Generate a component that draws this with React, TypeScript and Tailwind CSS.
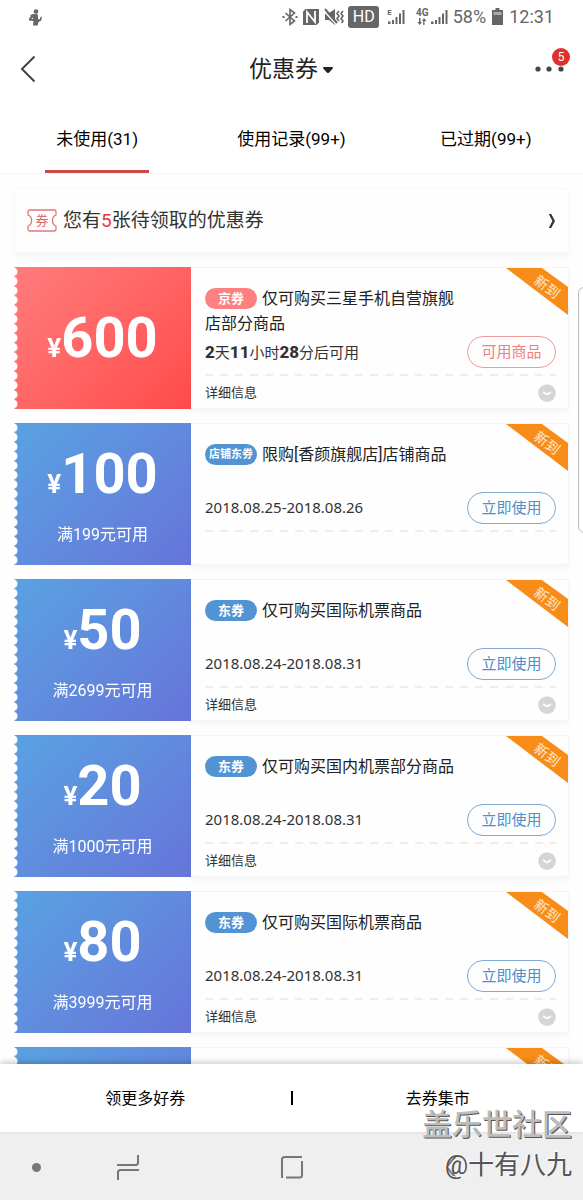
import React from "react";

type Coupon = {
  theme: "red" | "blue";
  amount: string;
  condition?: string;
  tag: string;
  title: string;
  countdown?: [string, string][];
  period?: string;
  action: string;
  details: boolean;
};

const coupons: Coupon[] = [
  {
    theme: "red",
    amount: "600",
    tag: "京券",
    title: "仅可购买三星手机自营旗舰店部分商品",
    countdown: [["2", "天"], ["11", "小时"], ["28", "分后可用"]],
    action: "可用商品",
    details: true,
  },
  { theme: "blue", amount: "100", condition: "满199元可用", tag: "店铺东券", title: "限购[香颜旗舰店]店铺商品", period: "2018.08.25-2018.08.26", action: "立即使用", details: false },
  { theme: "blue", amount: "50", condition: "满2699元可用", tag: "东券", title: "仅可购买国际机票商品", period: "2018.08.24-2018.08.31", action: "立即使用", details: true },
  { theme: "blue", amount: "20", condition: "满1000元可用", tag: "东券", title: "仅可购买国内机票部分商品", period: "2018.08.24-2018.08.31", action: "立即使用", details: true },
  { theme: "blue", amount: "80", condition: "满3999元可用", tag: "东券", title: "仅可购买国际机票商品", period: "2018.08.24-2018.08.31", action: "立即使用", details: true },
  { theme: "blue", amount: "50", condition: "满2699元可用", tag: "东券", title: "仅可购买国际机票商品", period: "2018.08.24-2018.08.31", action: "立即使用", details: true },
];

function Signal() {
  return (
    <svg width="18" height="16" viewBox="0 0 18 16" fill="#666">
      <path d="M0 15v-2.500h2.500V15zM4 15v-4h2v4zM7.500 15V8h2v7zM11 15V4.500h2V15zM14.500 15V1h2v14z" />
    </svg>
  );
}

function StatusBar() {
  return (
    <div className="flex h-[34px] shrink-0 items-center justify-between pr-[29px] pl-[28px] text-[#666]">
      <svg width="15" height="17" viewBox="0 0 15 17" fill="#666" aria-hidden="true">
        <circle cx="8" cy="2.500" r="2.300" />
        <path d="M5.500 5H9l1 1.500V10l1.500.5L12.500 8l1.500-.5-.8 4-2.700 1.500L9.500 16.500H5l.5-4.500L1 11.500.8 10 3 7 2 6zM4.800 8.500 3.200 10h2z" fillRule="evenodd" />
      </svg>
      <div className="flex items-center gap-1">
        <svg width="16" height="18" viewBox="0 0 16 18" fill="none" stroke="#666" strokeWidth="1.600">
          <path d="m3.500 5 9 8L8 16.500v-15L12.500 5l-9 8" />
          <path d="M.5 9h2M13.500 9h2" strokeWidth="2" />
        </svg>
        <svg width="18" height="18" viewBox="0 0 18 18">
          <path d="M3.500 1H17v13.500L14.500 17H1V3.500z" fill="#666" />
          <path d="M5 15V4l8 10V3" fill="none" stroke="#fff" strokeWidth="1.800" />
        </svg>
        <svg width="20" height="18" viewBox="0 0 20 18">
          <path d="M1 5h4l6-4v16l-6-5H1z" fill="#666" />
          <path d="m-1 2 13 14" stroke="#fff" strokeWidth="1.600" />
          <path d="m1 1 12 14" stroke="#666" strokeWidth="2" />
          <path d="m15 3-2 2.500L15 8l-2 2.500 2 2.500M19 3l-2 2.500L19 8l-2 2.500 2 2.500-1.500 2" fill="none" stroke="#666" strokeWidth="1.600" />
        </svg>
        <span className="flex h-[22px] w-[31px] items-center justify-center rounded-[3px] bg-[#666] text-[16px] text-white">HD</span>
        <div className="mr-1 flex items-center pl-1">
          <span className="-mr-1 self-start text-[8px] leading-none font-bold">E</span>
          <Signal />
        </div>
        <div className="flex items-center">
          <div className="flex w-[17px] flex-col items-center">
            <span className="text-[10px] leading-none font-bold">4G</span>
            <svg width="10" height="8" viewBox="0 0 10 8" fill="#666">
              <path d="M2 0h1.500v4H5L2.700 7 .5 4H2zM7.500 7H6.200V3H5l2-3 2.500 3h-2z" />
            </svg>
          </div>
          <Signal />
        </div>
        <span className="text-[18px] leading-none">58%</span>
        <svg width="15" height="18" viewBox="0 0 15 18">
          <path d="M5.500 0h4v2H13v15H2V2h3.500z" fill="#666" />
          <path d="M3.500 4h8v3h-8z" fill="#aaa" />
        </svg>
        <span className="text-[18px] leading-none">12:31</span>
      </div>
    </div>
  );
}

function Header() {
  return (
    <header className="grid h-[70px] shrink-0 grid-cols-[1fr_auto_1fr] items-center px-[18px]">
      <button aria-label="返回" className="w-5">
        <svg width="20" height="28" viewBox="0 0 20 28" fill="none" stroke="#444" strokeWidth="2">
          <path d="M16.500 1.500 4 14l12.500 12.500" />
        </svg>
      </button>
      <button className="flex items-center gap-1 pt-[2px] text-[23px] text-[#222]">
        优惠券
        <svg width="12" height="8" viewBox="0 0 12 8" fill="#222">
          <path d="M2 1h8q2 0 .5 1.700L7.200 6.500q-1.200 1-2.400 0L1.500 2.700Q0 1 2 1z" />
        </svg>
      </button>
      <button aria-label="更多" className="relative justify-self-end">
        <svg width="31" height="28" viewBox="0 0 31 28" fill="#444">
          <circle cx="4" cy="14" r="2.600" />
          <circle cx="15" cy="14" r="2.600" />
          <circle cx="27" cy="14" r="2.600" />
        </svg>
        <span className="absolute -top-[7px] -right-[5px] flex size-[18px] items-center justify-center rounded-full bg-[#e0302e] text-[12px] leading-none text-white">5</span>
      </button>
    </header>
  );
}

function Tabs() {
  return (
    <nav className="grid h-[70px] shrink-0 grid-cols-3 border-b border-[#f2f2f2] text-[17px] text-black">
      {["未使用(31)", "使用记录(99+)", "已过期(99+)"].map((label, i) => (
        <button key={label} className="flex justify-center">
          <span className={i === 0 ? "flex h-full w-[104px] items-center justify-center border-b-[3px] border-[#cd4a4a] pt-[6px]" : "flex h-full items-center justify-center border-b-[3px] border-transparent pt-[6px]"}>
            {label}
          </span>
        </button>
      ))}
    </nav>
  );
}

function Notice() {
  return (
    <a href="#claim" className="flex h-[65px] shrink-0 items-center gap-[6px] rounded-[3px] border border-[#f7f7f7] px-3 text-[19px] text-[#333] shadow-[0_4px_6px_rgba(0,0,0,0.03)]">
      <span className="relative flex h-[23px] w-[30px] items-center justify-center text-[13px] leading-none text-[#e06464]">
        <svg className="absolute inset-0" width="30" height="23" viewBox="0 0 30 23" fill="none" stroke="#df7777" strokeWidth="1.300">
          <path d="M3 1h24q2 0 2 2v3q-3.500 1-3.500 5.500T29 17v3q0 2-2 2H3q-2 0-2-2v-3q3.500-1 3.500-5.500T1 6V3q0-2 2-2z" />
        </svg>
        券
      </span>
      <span className="flex-1 leading-7">您有<span className="text-[#e03c3c]">5</span>张待领取的优惠券</span>
      <svg width="8" height="16" viewBox="0 0 8 16" fill="#333">
        <path d="M.8 1h2.400L7 8l-3.800 7H.8l3.600-7z" />
      </svg>
    </a>
  );
}

function Ribbon() {
  return (
    <div className="absolute top-0 right-0 flex h-[47px] w-[62px] items-center justify-center bg-[#f78c18] [clip-path:polygon(0_0,36px_0,100%_19px,100%_100%)]">
      <span className="mb-[10px] ml-5 rotate-[37deg] text-[14px] leading-none text-[#ffe9cf]">新到</span>
    </div>
  );
}

function CouponCard({ c }: { c: Coupon }) {
  const red = c.theme === "red";
  return (
    <article className="flex h-[142px] shrink-0">
      <div
        className={`flex w-[177px] shrink-0 flex-col items-center text-white [mask-image:radial-gradient(circle_at_-1px_50%,transparent_4px,black_5px)] [mask-size:100%_calc(100%/15)] ${
          red ? "justify-center bg-linear-135 from-[#ff7b7b] to-[#ff4a4a]" : "bg-linear-135 from-[#58a2e2] to-[#6674d9] pt-[19px]"
        }`}
      >
        <div className="flex items-baseline leading-none font-bold">
          <span className="text-[26px]">¥</span>
          <span className="text-[56px] leading-[64px]">{c.amount}</span>
        </div>
        {c.condition && <p className="mt-[17px] text-[16px] leading-6">{c.condition}</p>}
      </div>
      <div className="relative flex min-w-0 flex-1 flex-col border border-l-0 border-[#f5f5f5] pr-3 pl-[14px] shadow-[0_4px_6px_rgba(0,0,0,0.03)]">
        <Ribbon />
        <div className="flex h-[106px] flex-col">
          <h2 className="max-w-[256px] pt-[18px] text-[16px] leading-[25px] text-[#222]">
            <span
              className={`my-[2px] mr-[5px] inline-flex h-[21px] w-[52px] items-center justify-center rounded-full align-top leading-none font-bold whitespace-nowrap text-white ${
                red ? "bg-[#ff8080]" : "bg-[#5293d3]"
              } ${c.tag.length > 2 ? "text-[11px]" : "text-[13px]"}`}
            >
              {c.tag}
            </span>
            {c.title}
          </h2>
          <div className="mt-auto mb-[6px] flex h-[32px] items-center justify-between text-[#333]">
            {c.countdown ? (
              <p className="text-[15px] leading-none">
                {c.countdown.map(([n, unit]) => (
                  <React.Fragment key={unit}>
                    <b className="text-[17px] font-extrabold">{n}</b>
                    {unit}
                  </React.Fragment>
                ))}
              </p>
            ) : (
              <p className="pb-[2px] font-['Noto_Sans',sans-serif] text-[15px] leading-none">{c.period}</p>
            )}
            <button className={`h-[32px] w-[89px] rounded-full border text-[15px] ${red ? "border-[#f19a9a] text-[#f08080]" : "border-[#80aad0] text-[#4c8fc9]"}`}>
              {c.action}
            </button>
          </div>
        </div>
        <div className="h-[2px] shrink-0 bg-[repeating-linear-gradient(90deg,#ededed_0_8px,transparent_8px_15px)]" />
        {c.details && (
          <button className="flex flex-1 items-center justify-between pt-[2px] text-[13px] text-[#333]">
            详细信息
            <svg width="18" height="18" viewBox="0 0 18 18">
              <circle cx="9" cy="9" r="8.800" fill="#d5d5d5" />
              <path d="m5 8 4 2.500L13 8" fill="none" stroke="#fff" strokeWidth="1.600" />
            </svg>
          </button>
        )}
      </div>
    </article>
  );
}

function BottomBar() {
  return (
    <div className="relative grid h-[68px] shrink-0 grid-cols-[1fr_2px_1fr] items-center bg-white text-[16px] text-black shadow-[0_-2px_6px_rgba(0,0,0,0.2)]">
      <button className="pt-[2px]">领更多好券</button>
      <span className="h-[14px] bg-black" />
      <button className="pt-[2px]">去券集市</button>
    </div>
  );
}

function SystemNav() {
  return (
    <div className="grid h-[68px] shrink-0 grid-cols-[1fr_24px_1fr] items-center bg-[#efefef] pt-[2px]">
      <div className="flex items-center gap-[75px] pl-[32px]">
        <span className="size-[9px] rounded-full bg-[#777]" />
        <button aria-label="最近任务">
          <svg width="24" height="26" viewBox="0 0 24 26" fill="none" stroke="#777" strokeWidth="2">
            <path d="M1 11h18.500q2.500 0 2.500-2.500V1M23 16H4.500Q2 16 2 18.500V26" />
          </svg>
        </button>
      </div>
      <button aria-label="主屏幕">
        <svg width="24" height="24" viewBox="0 0 24 24" fill="none" stroke="#777" strokeWidth="2">
          <path d="M2 23V4.500Q2 2 4.500 2H22M22 6v14q0 2.500-2.500 2.500H6" />
        </svg>
      </button>
      <div className="flex items-center justify-end pr-[126px]">
        <button aria-label="返回上一级">
          <svg width="12" height="24" viewBox="0 0 12 24" fill="none" stroke="#777" strokeWidth="2">
            <path d="M11 1 1.500 12 11 23" />
          </svg>
        </button>
      </div>
    </div>
  );
}

export default function App() {
  return (
    <div className="relative flex h-screen flex-col overflow-hidden bg-white font-[Roboto,'Noto_Sans_CJK_SC',sans-serif]">
      <StatusBar />
      <Header />
      <Tabs />
      <main className="flex min-h-0 flex-1 flex-col gap-[14px] overflow-hidden bg-[#fefefe] px-[14px] pt-[14px]">
        <Notice />
        {coupons.map((c, i) => (
          <CouponCard key={i} c={c} />
        ))}
      </main>
      <BottomBar />
      <SystemNav />
      <div className="absolute top-[287px] -right-[12px] h-[246px] w-[17px] rounded-[6px] border border-[#bbb] bg-white" />
      <div className="pointer-events-none absolute right-[11px] bottom-[15px] text-right leading-[40px]">
        <p className="text-[30px] font-medium text-[#bdbdbd] [text-shadow:1px_1px_0_#555]">盖乐世社区</p>
        <p className="text-[26px] text-[#555] [text-shadow:-1px_-1px_0_#fff]">@十有八九</p>
      </div>
    </div>
  );
}
